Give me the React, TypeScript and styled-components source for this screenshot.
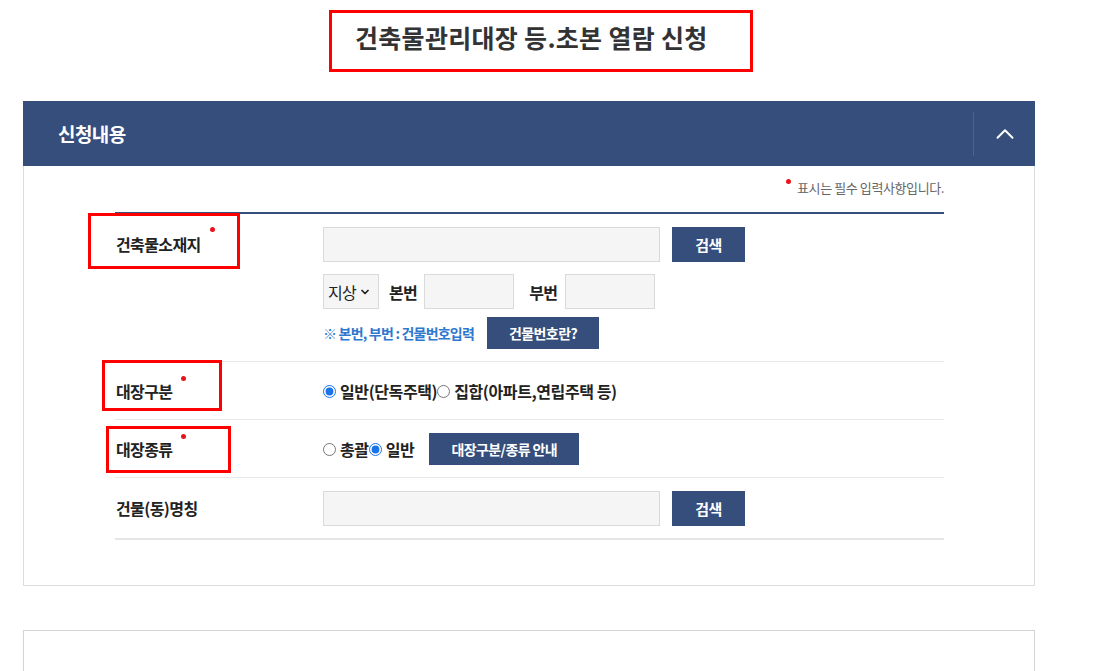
import { FC, ReactNode } from "react";
import styled, { createGlobalStyle } from "styled-components";
import { ChevronDown, ChevronUp } from "lucide-react";

const GlobalStyle = createGlobalStyle`
  * {
    box-sizing: border-box;
  }

  body {
    margin: 0;
    background: #fff;
    font-family: "Noto Sans CJK KR", "Noto Sans", sans-serif;
    color: #222;
  }
`;

const Page = styled.div`
  width: 1119px;
  padding: 0 84px 0 23px;
`;

const TitleBar = styled.div`
  height: 101px;
  display: flex;
  padding: 20px 0 0 332px;
`;

const Title = styled.h2`
  position: relative;
  margin: 0;
  height: 34px;
  font-size: 25px;
  line-height: 34px;
  font-weight: 700;
  letter-spacing: 0.3px;
  color: #333;
`;

// red annotation frame drawn over the captured page
const Mark = styled.span<{ $l: number; $t: number; $w: number; $h: number }>`
  position: absolute;
  left: ${(p) => p.$l}px;
  top: ${(p) => p.$t}px;
  width: ${(p) => p.$w}px;
  height: ${(p) => p.$h}px;
  border: 3px solid #ff0000;
  pointer-events: none;
`;

const PanelHeader = styled.div`
  height: 65px;
  display: flex;
  align-items: center;
  justify-content: space-between;
  padding-left: 35px;
  background: #354e7b;

  h3 {
    margin: 0;
    font-size: 19px;
    font-weight: 700;
    letter-spacing: -0.6px;
    color: #fff;
  }
`;

const Toggle = styled.button`
  width: 62px;
  height: 44px;
  display: flex;
  align-items: center;
  justify-content: center;
  padding: 0;
  background: transparent;
  border: none;
  border-left: 1px solid #4b6392;
  color: #fff;
`;

const PanelBody = styled.div`
  padding: 14px 90px 45px 91px;
  border: 1px solid #dcdcdc;
  border-top: none;
`;

const Notice = styled.p`
  margin: 0 0 16px;
  display: flex;
  justify-content: flex-end;
  align-items: flex-start;
  font-size: 13px;
  line-height: 16px;
  color: #666;
  letter-spacing: -0.4px;

  &::before {
    content: "";
    width: 5px;
    height: 5px;
    margin: -1px 6px 0 0;
    border-radius: 50%;
    background: #e8141c;
  }
`;

const Form = styled.div`
  border-top: 2px solid #354e7b;
  border-bottom: 2px solid #e6e6e6;
`;

const Row = styled.div<{ $center?: boolean }>`
  display: grid;
  grid-template-columns: 208px 1fr;
  align-items: ${(p) => (p.$center ? "center" : "start")};
  padding: 13px 0 12px;
  border-top: 1px solid #e8e8e8;

  &:first-child {
    border-top: none;
  }
`;

const Label = styled.div`
  position: relative;
  display: flex;
  align-items: flex-start;
  height: 35px;
  line-height: 35px;
  padding-left: 1px;
  font-size: 16px;
  font-weight: 700;
  letter-spacing: -0.6px;
  color: #222;
`;

const CenterLabel = styled(Label)`
  align-self: center;
  height: 31px;
  line-height: 31px;
`;

const Required = styled.i`
  display: inline-block;
  width: 5px;
  height: 5px;
  margin: 0 0 0 9px;
  border-radius: 50%;
  background: #e8141c;
`;

const Stack = styled.div`
  display: flex;
  flex-direction: column;
  align-items: flex-start;
`;

const Line = styled.div<{ $gap?: number; $mt?: number }>`
  display: flex;
  align-items: center;
  gap: ${(p) => p.$gap ?? 0}px;
  margin-top: ${(p) => p.$mt ?? 0}px;
`;

const TextInput = styled.input<{ $w: number }>`
  width: ${(p) => p.$w}px;
  height: 35px;
  margin: 0;
  padding: 0 8px;
  background: #f5f5f5;
  border: 1px solid #dadada;
  outline: none;
`;

const Button = styled.button<{ $w: number; $h?: number; $size?: number }>`
  width: ${(p) => p.$w}px;
  height: ${(p) => p.$h ?? 35}px;
  padding: 0;
  border: none;
  background: #354e7b;
  color: #fff;
  font-family: "Noto Sans CJK KR", sans-serif;
  font-size: ${(p) => p.$size ?? 15}px;
  font-weight: 700;
  letter-spacing: -0.6px;
`;

const FakeSelect = styled.div`
  width: 56px;
  height: 35px;
  display: flex;
  align-items: center;
  gap: 3px;
  padding-left: 4px;
  background: #f5f5f5;
  border: 1px solid #dadada;
  font-size: 16px;
  letter-spacing: -0.8px;
  color: #222;
`;

const FieldName = styled.span<{ $ml: number }>`
  margin: 0 7px 0 ${(p) => p.$ml}px;
  font-size: 16px;
  font-weight: 700;
  letter-spacing: -0.6px;
  color: #222;
`;

const Hint = styled.span`
  font-size: 14px;
  font-weight: 700;
  letter-spacing: -0.8px;
  color: #2f78cf;
`;

const Radio = styled.label`
  display: inline-flex;
  align-items: center;
  height: 32px;
  font-size: 16px;
  font-weight: 700;
  letter-spacing: -0.4px;
  color: #222;

  input {
    width: 13px;
    height: 13px;
    margin: 0 4px 0 0;
    accent-color: #1a73e8;
  }
`;

const NextPanel = styled.div`
  height: 120px;
  margin-top: 44px;
  border: 1px solid #d4d4d4;
`;

const Req: FC<{ children: ReactNode; mark?: [number, number, number, number]; center?: boolean }> = ({
  children,
  mark,
  center,
}) => {
  const Comp = center ? CenterLabel : Label;
  return (
    <Comp>
      {children}
      <Required />
      {mark && <Mark $l={mark[0]} $t={mark[1]} $w={mark[2]} $h={mark[3]} />}
    </Comp>
  );
};

const App: FC = () => {
  return (
    <Page>
      <GlobalStyle />
      <TitleBar>
        <Title>
          건축물관리대장 등.초본 열람 신청
          <Mark $l={-26} $t={-10} $w={424} $h={62} />
        </Title>
      </TitleBar>

      <section>
        <PanelHeader>
          <h3>신청내용</h3>
          <Toggle aria-label="접기">
            <ChevronUp size={30} strokeWidth={1.6} />
          </Toggle>
        </PanelHeader>
        <PanelBody>
          <Notice>표시는 필수 입력사항입니다.</Notice>
          <Form>
            <Row>
              <Req mark={[-27, -14, 152, 56]}>건축물소재지</Req>
              <Stack>
                <Line $gap={12}>
                  <TextInput $w={337} />
                  <Button $w={73}>검색</Button>
                </Line>
                <Line $mt={12}>
                  <FakeSelect>
                    지상
                    <ChevronDown size={12} strokeWidth={3.5} />
                  </FakeSelect>
                  <FieldName $ml={10}>본번</FieldName>
                  <TextInput $w={90} />
                  <FieldName $ml={15}>부번</FieldName>
                  <TextInput $w={90} />
                </Line>
                <Line $mt={8} $gap={13}>
                  <Hint>※ 본번, 부번 : 건물번호입력</Hint>
                  <Button $w={112} $h={32} $size={14}>
                    건물번호란?
                  </Button>
                </Line>
              </Stack>
            </Row>

            <Row $center>
              <Req center mark={[-13, -16, 120, 51]}>
                대장구분
              </Req>
              <Line>
                <Radio>
                  <input type="radio" name="kind" defaultChecked />
                  일반(단독주택)
                </Radio>
                <Radio>
                  <input type="radio" name="kind" />
                  집합(아파트,연립주택 등)
                </Radio>
              </Line>
            </Row>

            <Row $center>
              <Req center mark={[-9, -8, 125, 47]}>
                대장종류
              </Req>
              <Line>
                <Radio>
                  <input type="radio" name="type" />
                  총괄
                </Radio>
                <Radio>
                  <input type="radio" name="type" defaultChecked />
                  일반
                </Radio>
                <Button $w={150} $h={32} $size={14} style={{ marginLeft: 15 }}>
                  대장구분/종류 안내
                </Button>
              </Line>
            </Row>

            <Row $center>
              <CenterLabel>건물(동)명칭</CenterLabel>
              <Line $gap={12}>
                <TextInput $w={337} />
                <Button $w={73}>검색</Button>
              </Line>
            </Row>
          </Form>
        </PanelBody>
      </section>

      <NextPanel />
    </Page>
  );
};

export default App;
